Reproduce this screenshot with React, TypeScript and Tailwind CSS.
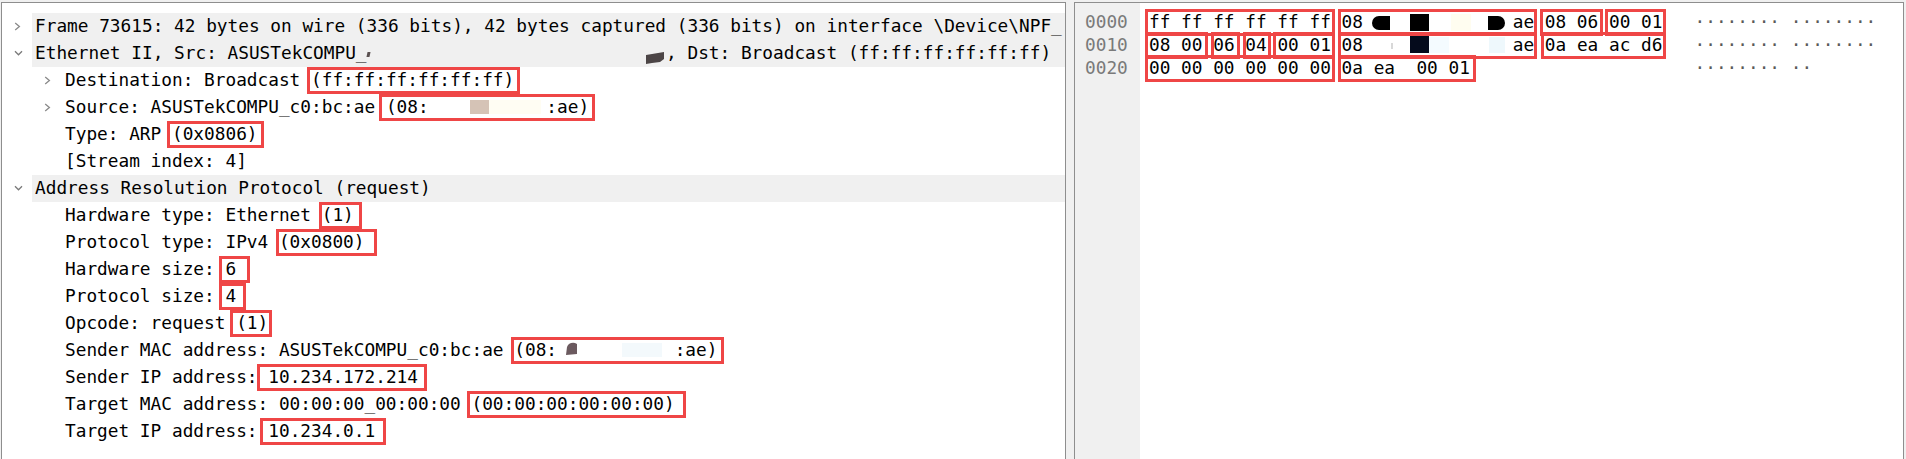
import React from "react";

function ChevR() {
  return (
    <svg width="7" height="9" viewBox="0 0 7 9" className="block">
      <path d="M1.2 1 L5.4 4.5 L1.2 8" stroke="#8a8a8a" strokeWidth="1.3" fill="none" />
    </svg>
  );
}

function ChevD() {
  return (
    <svg width="9" height="6" viewBox="0 0 9 6" className="block">
      <path d="M1 1.2 L4.5 4.8 L8 1.2" stroke="#7a7a7a" strokeWidth="1.3" fill="none" />
    </svg>
  );
}

function Box({
  children,
  pos = "-left-[5px] -right-[6px] top-0 bottom-0",
}: {
  children: React.ReactNode;
  pos?: string;
}) {
  return (
    <span className="relative inline-block">
      {children}
      <span className={`pointer-events-none absolute ${pos} border-[3px] border-[#ef4646]`} />
    </span>
  );
}

function HBox({
  children,
  pos = "-left-[4px] -right-[4px] -top-[2px] -bottom-[2px]",
}: {
  children: React.ReactNode;
  pos?: string;
}) {
  return (
    <span className="relative inline-block">
      {children}
      <span className={`pointer-events-none absolute ${pos} border-[3px] border-[#ef4646]`} />
    </span>
  );
}

function Row({
  depth,
  chev,
  hl,
  children,
}: {
  depth: 0 | 1;
  chev?: "r" | "d";
  hl?: boolean;
  children: React.ReactNode;
}) {
  return (
    <div className="flex h-[27px] leading-[27px]">
      {depth === 1 && <div className="w-[30px] shrink-0" />}
      <div className="flex w-[30px] shrink-0 items-center pl-[12px] pb-[1px]">
        {chev === "r" ? <ChevR /> : chev === "d" ? <ChevD /> : null}
      </div>
      <div className={`relative flex-1 whitespace-pre pl-[3px] ${hl ? "bg-[#f0f0f0]" : ""}`}>
        {children}
      </div>
    </div>
  );
}

function Tree() {
  return (
    <div className="pt-[10px]">
      <Row depth={0} chev="r" hl>
        Frame 73615: 42 bytes on wire (336 bits), 42 bytes captured (336 bits) on interface \Device\NPF_
      </Row>
      <Row depth={0} chev="d" hl>
        <span className="absolute left-[335px] top-[12px] h-[5px] w-[3px] -skew-x-12 bg-[#5a5050]" />
        <svg
          width="19"
          height="12"
          viewBox="0 0 19 12"
          className="absolute left-[614px] top-[12px]"
        >
          <path d="M0 3 L18 0 L18 7 L14 10 L6 11 L0 12 Z" fill="#4c4546" />
        </svg>
        <span className="relative">
          {"Ethernet II, Src: ASUSTekCOMPU_                            , Dst: Broadcast (ff:ff:ff:ff:ff:ff)"}
        </span>
      </Row>
      <Row depth={1} chev="r">
        {"Destination: Broadcast "}
        <Box pos="-left-[4px] -right-[6px] top-0 bottom-0">(ff:ff:ff:ff:ff:ff)</Box>
      </Row>
      <Row depth={1} chev="r">
        <span className="absolute left-[408px] top-[6px] h-[14px] w-[19px] bg-[#d5c3b6]" />
        <span className="absolute left-[427px] top-[6px] h-[14px] w-[52px] bg-[#fffdf3]" />
        {"Source: ASUSTekCOMPU_c0:bc:ae "}
        <Box pos="-left-[7px] -right-[6px] top-0 bottom-0">{"(08:           :ae)"}</Box>
      </Row>
      <Row depth={1}>
        {"Type: ARP "}
        <Box>(0x0806)</Box>
      </Row>
      <Row depth={1}>[Stream index: 4]</Row>
      <Row depth={0} chev="d" hl>
        Address Resolution Protocol (request)
      </Row>
      <Row depth={1}>
        {"Hardware type: Ethernet "}
        <Box pos="-left-[3px] -right-[8px] top-0 bottom-0">(1)</Box>
      </Row>
      <Row depth={1}>
        {"Protocol type: IPv4 "}
        <Box pos="-left-[3px] -right-[12px] top-0 bottom-0">(0x0800)</Box>
      </Row>
      <Row depth={1}>
        {"Hardware size: "}
        <Box pos="-left-[6px] -right-[14px] top-0 bottom-0">6</Box>
      </Row>
      <Row depth={1}>
        {"Protocol size: "}
        <Box pos="-left-[6px] -right-[10px] top-0 bottom-0">4</Box>
      </Row>
      <Row depth={1}>
        {"Opcode: request "}
        <Box pos="-left-[6px] -right-[4px] top-0 bottom-0">(1)</Box>
      </Row>
      <Row depth={1}>
        <svg
          width="13"
          height="13"
          viewBox="0 0 13 13"
          className="absolute left-[503px] top-[5px]"
        >
          <path d="M1 13 L2 5 Q4 0 10 1 L12 2 L12 12 Z" fill="#6b5a5f" />
        </svg>
        <span className="absolute left-[560px] top-[6px] h-[14px] w-[40px] bg-[#f3f9fc]" />
        {"Sender MAC address: ASUSTekCOMPU_c0:bc:ae "}
        <Box pos="-left-[3px] -right-[7px] top-0 bottom-0">{"(08:           :ae)"}</Box>
      </Row>
      <Row depth={1}>
        {"Sender IP address: "}
        <Box pos="-left-[11px] -right-[9px] top-0 bottom-0">10.234.172.214</Box>
      </Row>
      <Row depth={1}>
        {"Target MAC address: 00:00:00_00:00:00 "}
        <Box pos="-left-[4px] -right-[11px] top-0 bottom-0">(00:00:00:00:00:00)</Box>
      </Row>
      <Row depth={1}>
        {"Target IP address: "}
        <Box pos="-left-[8px] -right-[11px] top-0 bottom-0">10.234.0.1</Box>
      </Row>
    </div>
  );
}

function HexPanel() {
  return (
    <div className="flex h-full">
      <div className="w-[65px] shrink-0 bg-[#f0f0f0] pl-[10px] pt-[8px] text-[#7a7a7a]">
        <div className="h-[23px] leading-[23px]">0000</div>
        <div className="h-[23px] leading-[23px]">0010</div>
        <div className="h-[23px] leading-[23px]">0020</div>
      </div>
      <div className="flex-1 pl-[9px] pt-[8px]">
        <div className="relative flex h-[23px] whitespace-pre leading-[23px]">
          <span className="inline-block w-[51ch]">
            <HBox>ff ff ff ff ff ff</HBox>{" "}
            <HBox pos="-left-[4px] -right-[3px] -top-[2px] -bottom-[2px]">{"08              ae"}</HBox>{" "}
            <HBox pos="-left-[5px] -right-[5px] -top-[2px] -bottom-[2px]">08 06</HBox>{" "}
            <HBox>00 01</HBox>
          </span>
          <span className="text-[#5a5a5a]">········ ········</span>
          <span className="absolute left-[223px] top-[5px] h-[14px] w-[18px] rounded-l-full bg-black" />
          <span className="absolute left-[261px] top-[3px] h-[17px] w-[19px] bg-black" />
          <span className="absolute left-[302px] top-[3px] h-[17px] w-[20px] bg-[#fffdf0]" />
          <span className="absolute left-[339px] top-[5px] h-[14px] w-[17px] rounded-r-full bg-black" />
        </div>
        <div className="relative flex h-[23px] whitespace-pre leading-[23px]">
          <span className="inline-block w-[51ch]">
            <HBox pos="-left-[4px] -right-[6px] -top-[2px] -bottom-[2px]">08 00</HBox>{" "}
            <HBox pos="-left-[2px] -right-[5px] -top-[2px] -bottom-[2px]">06</HBox>{" "}
            <HBox pos="-left-[2px] -right-[4px] -top-[2px] -bottom-[2px]">04</HBox>{" "}
            <HBox>00 01</HBox>{" "}
            <HBox pos="-left-[4px] -right-[3px] -top-[2px] -bottom-[2px]">{"08              ae"}</HBox>{" "}
            <HBox>0a ea ac d6</HBox>
          </span>
          <span className="text-[#5a5a5a]">········ ········</span>
          <span className="absolute left-[242px] top-[9px] h-[6px] w-[2px] bg-[#d8d8d8]" />
          <span className="absolute left-[261px] top-[2px] h-[17px] w-[19px] bg-[#050b1c]" />
          <span className="absolute left-[280px] top-[3px] h-[16px] w-[20px] bg-[#f4fbff]" />
          <span className="absolute left-[340px] top-[3px] h-[16px] w-[16px] bg-[#eef8fc]" />
        </div>
        <div className="relative flex h-[23px] whitespace-pre leading-[23px]">
          <span className="inline-block w-[51ch]">
            <HBox>00 00 00 00 00 00</HBox>{" "}
            <HBox pos="-left-[4px] -right-[6px] -top-[2px] -bottom-[2px]">0a ea  00 01</HBox>
          </span>
          <span className="text-[#5a5a5a]">········ ··</span>
        </div>
      </div>
    </div>
  );
}

export default function App() {
  return (
    <div className="flex h-[459px] w-[1906px] overflow-hidden bg-[#f0f0f0] pl-[1px] pt-[2px] font-['DejaVu_Sans_Mono',monospace] text-[17.77px] text-black">
      <div className="w-[1065px] shrink-0 overflow-hidden border border-b-0 border-[#8e8e8e] bg-white">
        <Tree />
      </div>
      <div className="w-[8px] shrink-0" />
      <div className="w-[830px] shrink-0 overflow-hidden border border-b-0 border-[#8e8e8e] bg-white">
        <HexPanel />
      </div>
    </div>
  );
}
